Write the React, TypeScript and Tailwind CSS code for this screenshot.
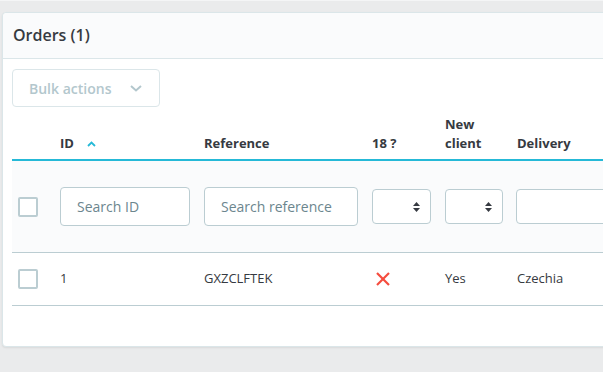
import React from "react";

const Caret = () => (
  <svg width="7" height="11" viewBox="0 0 7 11" className="absolute right-[10px] top-1/2 -translate-y-1/2">
    <polygon points="0,4.5 3.5,0.5 7,4.5" fill="#363a41" />
    <polygon points="0,6.5 7,6.5 3.5,10.5" fill="#363a41" />
  </svg>
);

const Select = ({ w }: { w: string }) => (
  <div className={`relative h-[35px] ${w} bg-white border border-[#bbcdd2] rounded-[4px]`}>
    <Caret />
  </div>
);

const Checkbox = () => (
  <div className="w-[20px] h-[20px] border-2 border-[#bbcdd2] rounded-[2px] bg-white" />
);

export default function App() {
  return (
    <div className="w-[603px] h-[372px] overflow-hidden bg-[#eaebec] font-['Open_Sans',sans-serif] text-[#363a41]">
      <div className="h-px bg-[#f4f5f6]" />
      <div className="pt-[11px] pl-[2px]">
        <div className="w-[800px] bg-white border border-[#dbe6e9] rounded-[4px] shadow-[0_1px_2px_rgba(0,0,0,0.08)]">
          <div className="bg-[#fafbfc] border-b border-[#dbe6e9] rounded-t-[4px] pl-[10px] pt-[10px] pb-[11px] text-[16px] leading-[24px] font-semibold">
            Orders (1)
          </div>
          <div className="pl-[9px] pt-[10px] pb-[40px]">
            <div className="w-[148px] h-[38px] border border-[#dbe6e9] rounded-[4px] flex items-center pl-[16px] pr-[17px] justify-between text-[14px] font-semibold text-[#b3c7cd]">
              <span>Bulk actions</span>
              <svg width="12" height="7" viewBox="0 0 12 7">
                <polyline points="1,1 6,5.5 11,1" fill="none" stroke="#b3c7cd" strokeWidth="2" />
              </svg>
            </div>
            <div className="grid grid-cols-[41px_144px_168px_73px_72px_1fr] text-[13px]">
              {/* header */}
              <div className="h-[54px] border-b-2 border-[#25b9d7]" />
              <div className="h-[54px] border-b-2 border-[#25b9d7] px-[7px] pb-[6px] flex items-end font-bold leading-[19px]">
                <span>ID</span>
                <svg width="9" height="6" viewBox="0 0 9 6" className="ml-[13px] mb-[6px]">
                  <polyline points="1,5 4.5,1.5 8,5" fill="none" stroke="#25b9d7" strokeWidth="1.8" />
                </svg>
              </div>
              <div className="h-[54px] border-b-2 border-[#25b9d7] px-[7px] pb-[6px] flex items-end font-bold leading-[19px]">Reference</div>
              <div className="h-[54px] border-b-2 border-[#25b9d7] px-[7px] pb-[6px] flex items-end font-bold leading-[19px]">18 ?</div>
              <div className="h-[54px] border-b-2 border-[#25b9d7] px-[7px] pb-[6px] flex items-end font-bold leading-[19px]">New<br />client</div>
              <div className="h-[54px] border-b-2 border-[#25b9d7] px-[7px] pb-[6px] flex items-end font-bold leading-[19px]">Delivery</div>

              {/* filters */}
              <div className="h-[92px] bg-[#fafbfc] border-b border-[#bbcdd2] pl-[6px] flex items-center"><Checkbox /></div>
              <div className="h-[92px] bg-[#fafbfc] border-b border-[#bbcdd2] px-[7px] flex items-center">
                <input placeholder="Search ID" className="w-full h-[39px] border border-[#bbcdd2] rounded-[4px] bg-white px-[16px] text-[14px] placeholder:text-[#6c868e] outline-none" />
              </div>
              <div className="h-[92px] bg-[#fafbfc] border-b border-[#bbcdd2] px-[7px] flex items-center">
                <input placeholder="Search reference" className="w-full h-[39px] border border-[#bbcdd2] rounded-[4px] bg-white px-[16px] text-[14px] placeholder:text-[#6c868e] outline-none" />
              </div>
              <div className="h-[92px] bg-[#fafbfc] border-b border-[#bbcdd2] px-[7px] flex items-center"><Select w="w-full" /></div>
              <div className="h-[92px] bg-[#fafbfc] border-b border-[#bbcdd2] px-[7px] flex items-center"><Select w="w-full" /></div>
              <div className="h-[92px] bg-[#fafbfc] border-b border-[#bbcdd2] pl-[6px] flex items-center"><Select w="w-[140px]" /></div>

              {/* data row */}
              <div className="h-[53px] border-b border-[#bbcdd2] pl-[6px] flex items-center"><Checkbox /></div>
              <div className="h-[53px] border-b border-[#bbcdd2] px-[7px] flex items-center">1</div>
              <div className="h-[53px] border-b border-[#bbcdd2] px-[7px] flex items-center">GXZCLFTEK</div>
              <div className="h-[53px] border-b border-[#bbcdd2] px-[7px] flex items-center">
                <svg width="14" height="14" viewBox="0 0 14 14" className="ml-[4px]">
                  <line x1="1" y1="1" x2="13" y2="13" stroke="#f54c3e" strokeWidth="2.2" />
                  <line x1="13" y1="1" x2="1" y2="13" stroke="#f54c3e" strokeWidth="2.2" />
                </svg>
              </div>
              <div className="h-[53px] border-b border-[#bbcdd2] px-[7px] flex items-center">Yes</div>
              <div className="h-[53px] border-b border-[#bbcdd2] px-[7px] flex items-center">Czechia</div>
            </div>
          </div>
        </div>
      </div>
    </div>
  );
}
